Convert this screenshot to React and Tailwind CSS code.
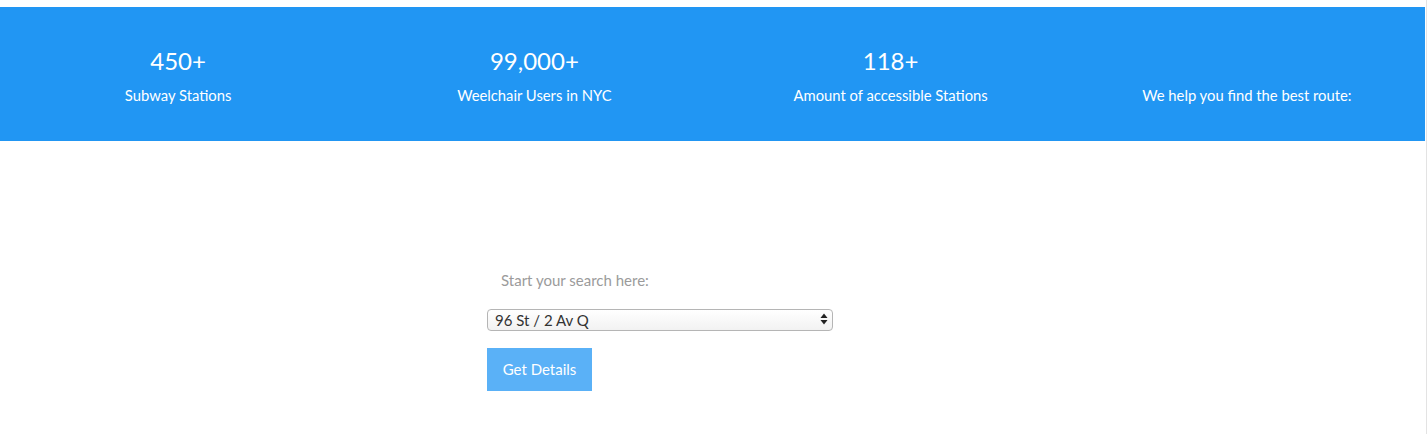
export default function App() {
  const stats = [
    { value: "450+", label: "Subway Stations" },
    { value: "99,000+", label: "Weelchair Users in NYC" },
    { value: "118+", label: "Amount of accessible Stations" },
    { value: "", label: "We help you find the best route:" },
  ];

  return (
    <div
      className="flex w-[1427px] h-[434px] bg-white overflow-hidden"
      style={{ fontFamily: "Lato, 'Open Sans', sans-serif" }}
    >
      <main className="w-[1425px] flex flex-col">
        {/* ── STATS BAND ── */}
        <section className="mt-[7px] h-[134px] bg-[#2196f3] grid grid-cols-4">
          {stats.map((s) => (
            <div key={s.label} className="flex flex-col items-center justify-center text-white pt-[2px]">
              <div className="h-[29px] text-[24px] leading-[29px]">{s.value}</div>
              <div className="mt-[11px] text-[14.8px] leading-[18px]">{s.label}</div>
            </div>
          ))}
        </section>

        {/* ── SEARCH ── */}
        <section className="ml-[487px] mt-[130px] w-[346px] flex flex-col">
          <p className="pl-[14px] text-[15px] leading-[18px] text-[#9b9b9b]">
            Start your search here:
          </p>

          <div className="relative mt-[19px] h-[22px]">
            <select
              defaultValue="96 St / 2 Av Q"
              className="appearance-none w-full h-full rounded-[4px] border border-[#b5b5b5]
              bg-gradient-to-b from-white to-[#f2f2f2] pl-[7px] pr-6 text-[15px] leading-[20px] text-[#333]"
              style={{ fontFamily: "Lato, 'Open Sans', sans-serif" }}
            >
              <option>96 St / 2 Av Q</option>
              <option>86 St Q</option>
              <option>72 St Q</option>
            </select>
            <svg
              className="absolute right-[5px] top-[5px] pointer-events-none"
              width="8"
              height="12"
              viewBox="0 0 8 12"
            >
              <path d="M4 0.5 L7.5 5 H0.5 Z" fill="#222" />
              <path d="M4 11.5 L7.5 7 H0.5 Z" fill="#222" />
            </svg>
          </div>

          <button className="mt-[18px] w-[105px] h-[43px] bg-[#5ab1f7] text-white text-[15px]">
            Get Details
          </button>
        </section>
      </main>

      {/* scrollbar edge */}
      <div className="w-[2px] border-r border-[#e3e3e3]" />
    </div>
  );
}
